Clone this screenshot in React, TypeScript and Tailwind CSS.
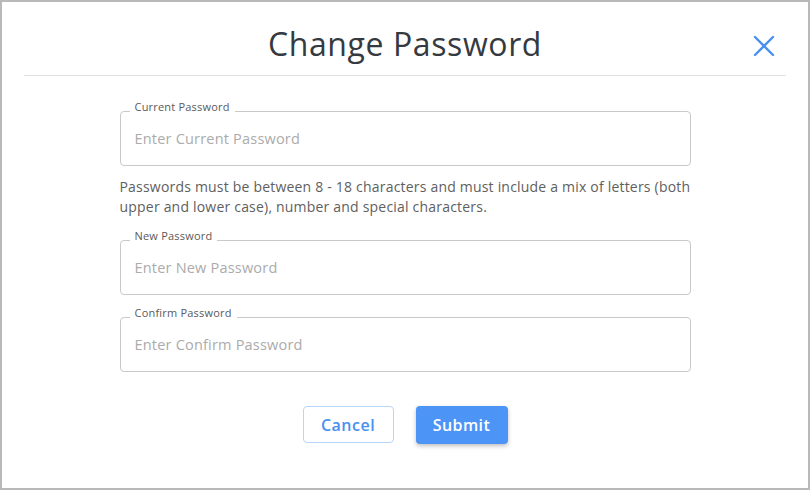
import { X } from "lucide-react";

type FieldProps = {
    label: string;
    placeholder: string;
    className?: string;
};

function PasswordField({ label, placeholder, className = "" }: FieldProps) {
    return (
        <div className={`relative h-[55px] rounded-[4px] border border-[#c9c9c9] ${className}`}>
            <label className="absolute left-[9px] top-[-12px] bg-white px-[5px] text-[11px] leading-[14px] tracking-[0.2px] text-[#5a5a5a]">
                {label}
            </label>
            <input
                type="password"
                placeholder={placeholder}
                className="h-full w-full rounded-[4px] bg-transparent px-[14px] text-[14.5px] tracking-[0.2px] text-[#333] outline-none placeholder:text-[#ababab]"
            />
        </div>
    );
}

export default function App() {
    return (
        <div
            className="flex h-[490px] w-[810px] flex-col border-2 border-[#b9b9b9] bg-white"
            style={{ fontFamily: '"Open Sans", "Noto Sans", sans-serif' }}
        >
            <header className="mx-[22px] grid h-[74px] grid-cols-[1fr_auto_1fr] items-start border-b border-[#e2e2e2]">
                <div />
                <h1 className="mt-[26px] text-[32px] font-normal leading-none tracking-[0.6px] text-[#343a40]">
                    Change Password
                </h1>
                <button
                    type="button"
                    aria-label="Close"
                    className="mr-[4px] mt-[26px] justify-self-end text-[#4a90f0]"
                >
                    <X size={36} strokeWidth={1.6} />
                </button>
            </header>

            <form className="mx-auto flex w-[571px] flex-col">
                <PasswordField
                    label="Current Password"
                    placeholder="Enter Current Password"
                    className="mt-[35px]"
                />
                <p className="mt-[11px] text-[14px] leading-[20px] tracking-[0.2px] text-[#606060]">
                    Passwords must be between 8 - 18 characters and must include a mix of letters (both
                    upper and lower case), number and special characters.
                </p>
                <PasswordField
                    label="New Password"
                    placeholder="Enter New Password"
                    className="mt-[23px]"
                />
                <PasswordField
                    label="Confirm Password"
                    placeholder="Enter Confirm Password"
                    className="mt-[22px]"
                />
                <div className="mt-[34px] flex justify-center gap-[22px]">
                    <button
                        type="button"
                        className="h-[37px] w-[91px] rounded-[4px] border border-[#b7d4fb] text-[16px] font-semibold tracking-[0.5px] text-[#4a90f0]"
                    >
                        Cancel
                    </button>
                    <button
                        type="submit"
                        className="h-[38px] w-[92px] rounded-[4px] bg-[#4c94f6] text-[16px] font-semibold tracking-[0.4px] text-white shadow-[0_2px_4px_rgba(0,0,0,0.25)]"
                    >
                        Submit
                    </button>
                </div>
            </form>
        </div>
    );
}
